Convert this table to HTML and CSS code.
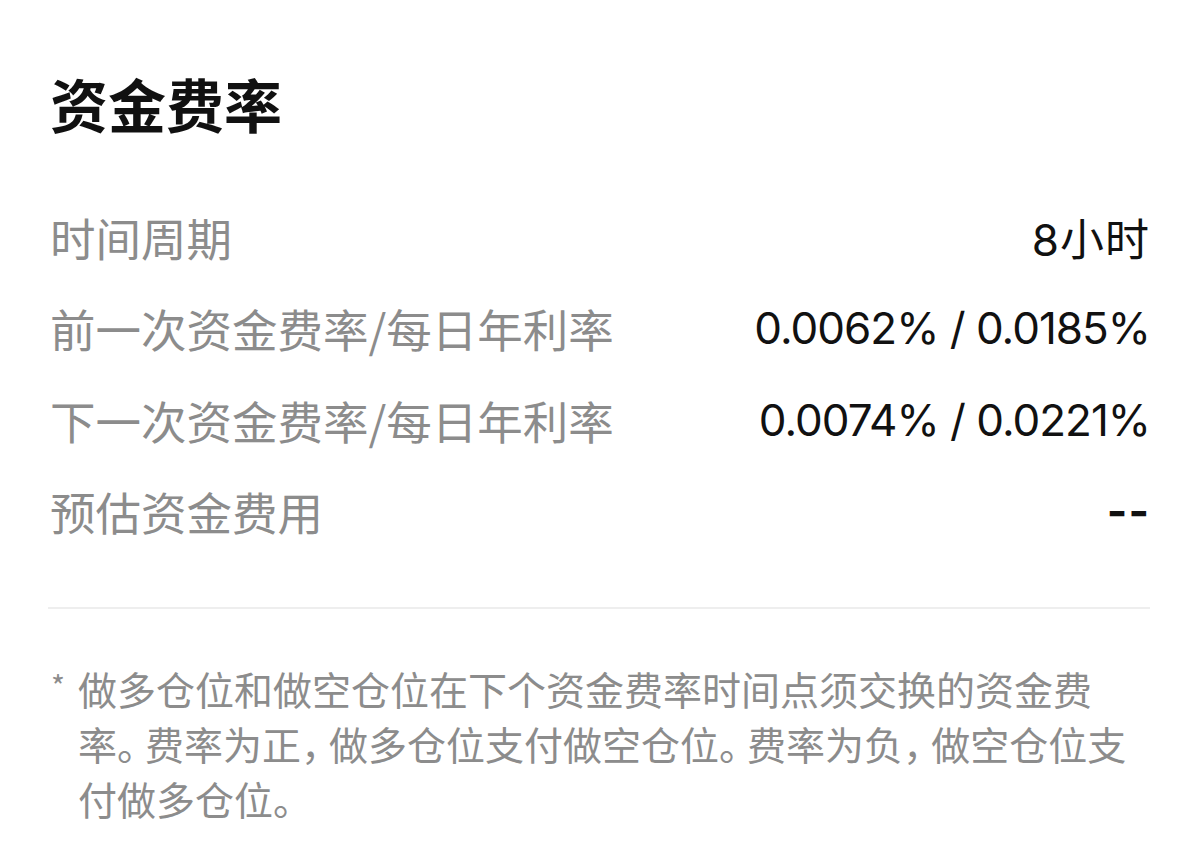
FILE: index.html
```html
<!DOCTYPE html>
<html lang="zh-CN">
<head>
<meta charset="utf-8">
<link rel="stylesheet" href="styles.css">
</head>
<body>
<div class="sheet">
  <h1 class="title">资金费率</h1>
  <div class="rows">
    <div class="row"><span class="label">时间周期</span><span class="value plain">8小时</span></div>
    <div class="row"><span class="label">前一次资金费率/每日年利率</span><span class="value">0.0062% / 0.0185%</span></div>
    <div class="row"><span class="label">下一次资金费率/每日年利率</span><span class="value">0.0074% / 0.0221%</span></div>
    <div class="row"><span class="label">预估资金费用</span><span class="value dash">--</span></div>
  </div>
  <div class="divider"></div>
  <div class="note">
    <span class="star">*</span>
    <p class="note-text"><span class="seg">做多仓位和做空仓位在下个资金费率时间点须交换的资金费</span><span class="seg">率<span class="punct">。</span></span><span class="seg">费率为正<span class="punct">，</span></span><span class="seg">做多仓位支付做空仓位<span class="punct">。</span></span><span class="seg">费率为负<span class="punct">，</span></span><span class="seg">做空仓位支</span><span class="seg">付做多仓位<span class="punct">。</span></span></p>
  </div>
</div>
</body>
</html>
```

FILE: styles.css
```css
html, body {
  margin: 0;
  padding: 0;
  background: #ffffff;
}
body {
  font-family: Inter, "Noto Sans CJK SC", sans-serif;
  color: #111111;
}
.sheet {
  padding: 63px 50px 0 50px;
}
.title {
  margin: 0;
  font-family: "Noto Sans CJK SC", sans-serif;
  font-size: 58px;
  font-weight: 700;
  line-height: 80px;
  color: #111111;
}
.rows {
  margin-top: 50px;
  display: flex;
  flex-direction: column;
}
.row {
  height: 91.5px;
  display: flex;
  align-items: center;
  justify-content: space-between;
}
.label {
  font-family: "Noto Sans CJK SC", sans-serif;
  font-size: 45.5px;
  color: #8c8c8c;
  position: relative;
  top: -2px;
}
.value {
  font-family: Inter, "Noto Sans CJK SC", sans-serif;
  font-size: 44px;
  letter-spacing: -1px;
  color: #111111;
  position: relative;
  top: -2px;
}
.plain {
  letter-spacing: 1px;
}
.dash {
  font-weight: 700;
  letter-spacing: 1px;
}
.divider {
  margin-top: 48px;
  height: 2px;
  background: #eeeeee;
  margin-left: -2px;
}
.note {
  margin-top: 52px;
  display: flex;
  font-family: "Noto Sans CJK SC", sans-serif;
  font-size: 39px;
  line-height: 55px;
  color: #8c8c8c;
}
.star {
  width: 27px;
  flex: none;
  padding-left: 1px;
  font-size: 30px;
  line-height: 48px;
}
.note-text {
  margin: 0;
}
.seg {
  white-space: nowrap;
}
.seg:first-child {
  white-space: normal;
}
.punct {
  letter-spacing: -11px;
}
```
